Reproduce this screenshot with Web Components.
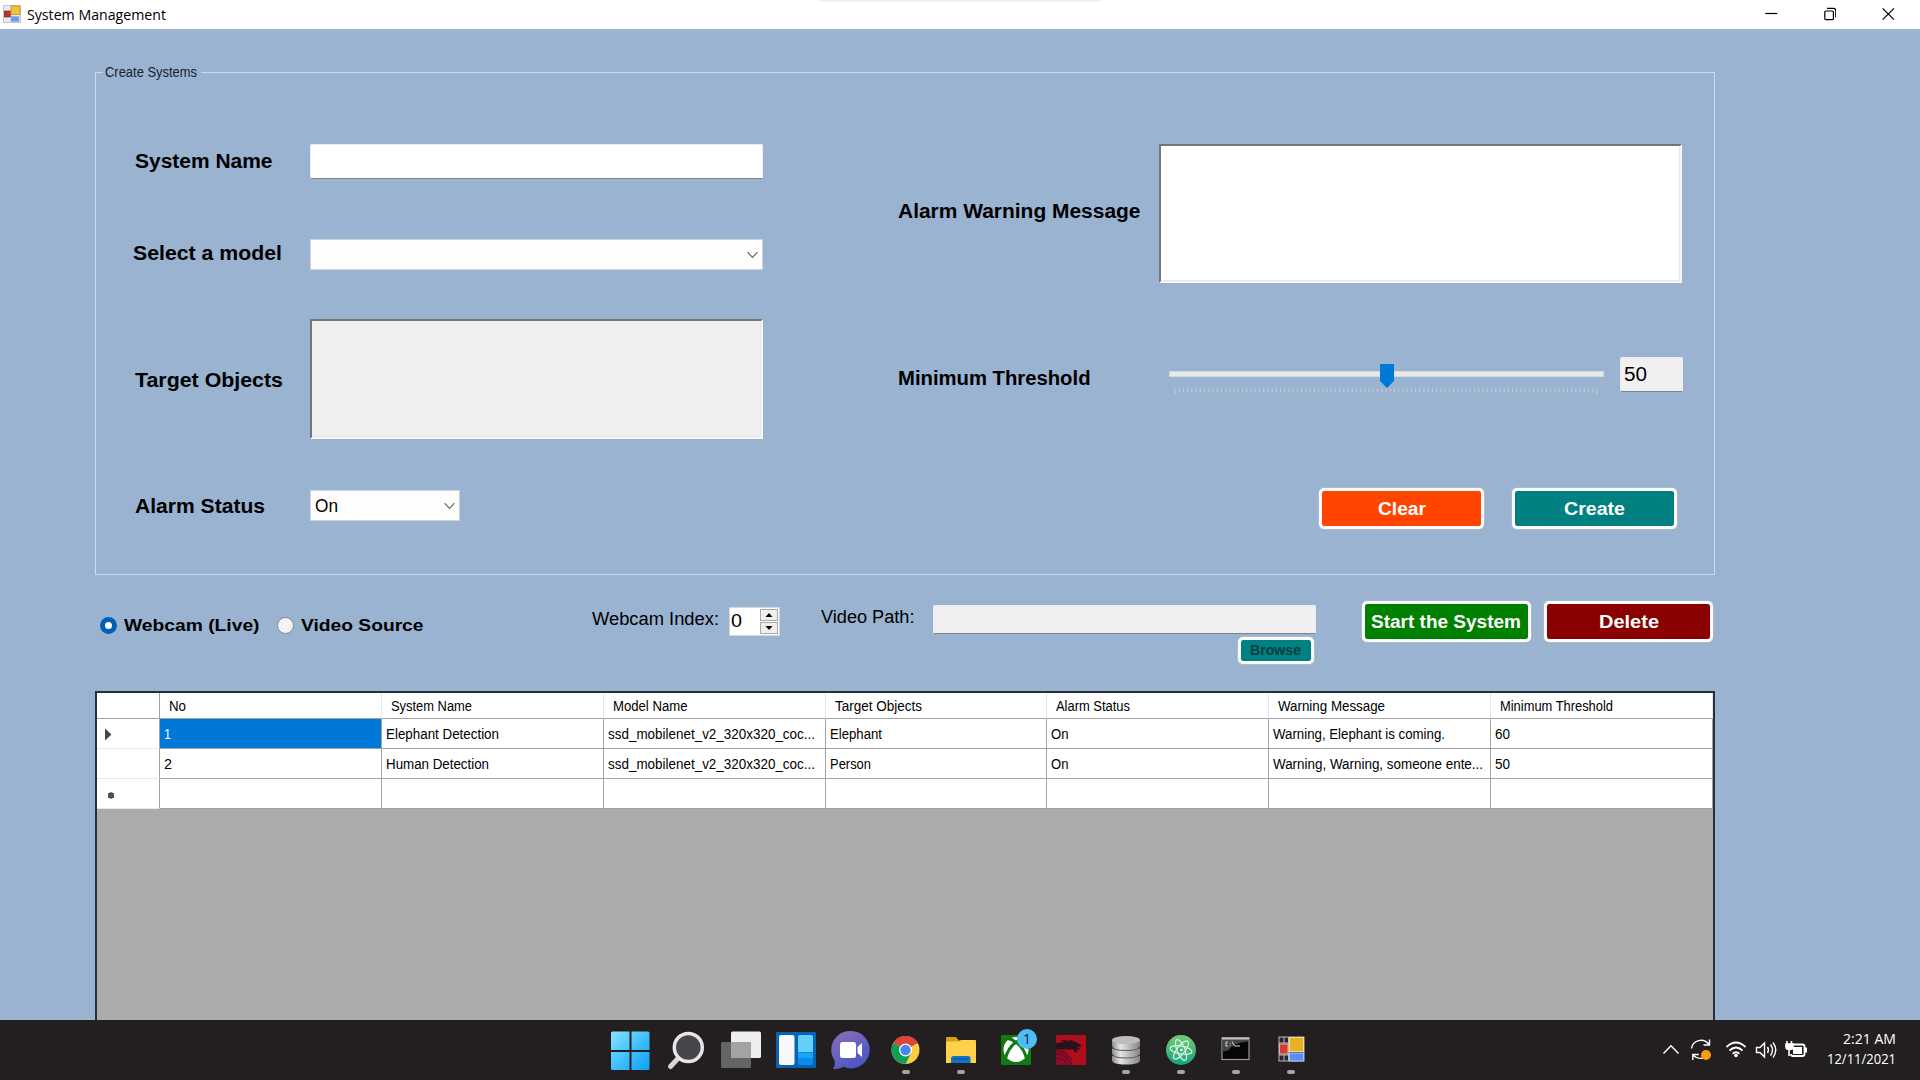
<!DOCTYPE html>
<html lang="en">
<head>
<meta charset="utf-8">
<title>System Management</title>
<style>
html,body{margin:0;padding:0;width:1920px;height:1080px;overflow:hidden;background:#99b3d1}
body{font-family:"Liberation Sans",Arial,sans-serif;color:#000}
</style>
</head>
<body>
<system-app></system-app>
<script>
function define(name, html, init) {
  const t = document.createElement('template');
  t.innerHTML = html;
  customElements.define(name, class extends HTMLElement {
    constructor() {
      super();
      this.attachShadow({ mode: 'open' }).appendChild(t.content.cloneNode(true));
    }
    connectedCallback() { if (init) init.call(this, this.shadowRoot); }
  });
}

// One line of text, stretched so that it spans the width given in "w".
define('ui-text', `<style>:host{display:block;white-space:nowrap;flex:none}span{display:inline-block;transform-origin:0 50%}</style><span><slot></slot></span>`,
function (r) {
  const w = parseFloat(this.getAttribute('w')), s = r.querySelector('span');
  if (!w) return;
  this.style.width = w + 'px';
  if (s.offsetWidth) {
    s.style.transform = 'none';
    s.style.transform = 'scaleX(' + (w / s.getBoundingClientRect().width).toFixed(4) + ')';
  }
});

define('title-bar', `<style>
:host{display:flex;height:29px;background:#fff;align-items:center;box-sizing:border-box;padding:0 25px 0 3px}
.ic{width:18px;height:18px;margin-right:6px;margin-top:-1px}
ui-text{font:15px/28px "Open Sans","Noto Sans",sans-serif;margin-top:-2px}
.edge{width:280px;height:3px;margin:0 0 26px 654px;background:linear-gradient(#eaeaea,#fff);border-radius:0 0 4px 4px}
.ctl{margin-left:auto;display:flex;gap:46px;margin-top:-1px}
.ctl svg{width:12.6px;height:14px;fill:none;stroke:#000;stroke-width:1.2}
</style>
<svg class="ic" viewBox="0 0 18 18"><rect x=".5" y=".5" width="17" height="17" fill="#e8ebef" stroke="#c3c8ce"/><rect x="1.3" y="6" width="6" height="6" fill="#c3302b" stroke="#7e1d1d" stroke-width=".6"/><rect x="8" y="1" width="9" height="8.6" fill="#f5c23a" stroke="#b8891c" stroke-width=".7"/><rect x="8" y="11.5" width="8" height="5" fill="#6f9cf0" stroke="#8fb0ec" stroke-width=".6"/></svg>
<ui-text w="139">System Management</ui-text><div class="edge"></div>
<div class="ctl">
<svg viewBox="0 0 12.6 14"><path d="M.3 6.5h12"/></svg>
<svg viewBox="0 0 12.6 14"><rect x=".8" y="4" width="8.6" height="8.6" rx="1"/><path d="M3 1.4h6.3q2.5 0 2.5 2.5v6.5"/></svg>
<svg viewBox="0 0 12.6 14"><path d="M.6 1.3l11.4 11.4M12 1.3L.6 12.7"/></svg>
</div>`);

define('text-box', `<style>
:host{display:flex;box-sizing:border-box;flex:none;background:#fff;border:1px solid #e9edf2;border-bottom:1.5px solid #7d838a;border-radius:2px;font-size:20px}
:host([readonly]){background:#f0f0f0}
</style><slot></slot>`);

define('sunken-area', `<style>
:host{display:block;box-sizing:border-box;flex:none;background:#fff;border:2px solid;border-color:#767676 #f4f6f8 #f4f6f8 #767676;box-shadow:inset -1px -1px #e6e6e6}
:host([readonly]){background:#f0f0f0}
</style>`);

define('combo-box', `<style>
:host{display:flex;align-items:center;justify-content:space-between;box-sizing:border-box;flex:none;height:31px;background:#fdfdfd;border:1px solid #cdd3da;padding:0 4px 0 4px;font-size:18px}
div{padding-top:2px}
svg{width:11px;height:8px;fill:none;stroke:#6a6a6a;stroke-width:1.2}
</style><div><slot></slot></div><svg viewBox="0 0 11 8"><path d="M.6 1.2L5.5 6.4 10.4 1.2"/></svg>`);

define('form-row', `<style>
:host{display:flex;align-items:center}
.l{flex:none;box-sizing:border-box;width:var(--lw);padding-left:var(--lp);padding-top:var(--lt,0px);padding-bottom:var(--lb,0px);font:bold 20px/24px "Liberation Sans",Arial,sans-serif}
</style><div class="l"><slot name="label"></slot></div><slot></slot>`);

define('track-bar', `<style>
:host{display:block;width:440px;height:34px;flex:none}svg{display:block}
</style><svg width="440" height="34" viewBox="0 0 440 34"><rect x="2.5" y="8.5" width="434" height="5" fill="#e7eaea" stroke="#d6d6d6"/><g class="t" stroke="#c3cad2" stroke-width="1.2"></g><path d="M213 1h14v17l-7 7-7-7z" fill="#0078d7"/></svg>`,
function (r) {
  let d = '';
  for (let i = 0; i <= 100; i++) d += `M${(8 + i * 4.22).toFixed(2)} 25.500v${i % 100 ? 4 : 6}`;
  r.querySelector('.t').innerHTML = `<path d="${d}"/>`;
});

define('push-button', `<style>
:host{display:flex;align-items:center;justify-content:center;box-sizing:border-box;flex:none;height:41px;background:var(--bg);background-clip:padding-box;border:3px solid #fbfbfb;border-radius:5px;box-shadow:0 0 0 .5px #c3c3c3;color:#fff;font:bold 18px/24px "Liberation Sans",Arial,sans-serif}
</style><slot></slot>`);

define('radio-option', `<style>
:host{display:flex;align-items:center;flex:none;font:bold 17px/22px "Liberation Sans",Arial,sans-serif}
i{box-sizing:border-box;width:17px;height:17px;border-radius:50%;border:1px solid #858585;background:#f3f3f3;margin:-2px 7px 0 0}
:host([checked]) i{border:5.5px solid #005fb8;background:#fff}
</style><i></i><slot></slot>`);

define('number-spinner', `<style>
:host{display:flex;box-sizing:border-box;flex:none;width:51px;height:29px;background:#fff;border:1px solid #d3d7dc;justify-content:space-between;padding:1px 1px 1px 1px;font:18px/24px "Liberation Sans",Arial,sans-serif}
.b{display:flex;flex-direction:column;width:18px;gap:1px}
.b div{flex:1;background:#efefef;border:1px solid #a9a9a9;display:flex;align-items:center;justify-content:center}
svg{width:8px;height:4px}
</style><slot></slot><div class="b"><div><svg viewBox="0 0 8 4"><path d="M4 0l3.5 4h-7z"/></svg></div><div><svg viewBox="0 0 8 4"><path d="M4 4L.5 0h7z"/></svg></div></div>`);

define('system-form', `<style>
:host{display:block;width:1620px}
fieldset{margin:0;padding:0;box-sizing:border-box;width:1620px;height:513px;border:1.5px solid #cfdae6;min-width:0;display:block}
legend{margin:0 0 0 7px;padding:0 4px 0 2px;height:20px;font-size:14px;line-height:20px;color:#1a222b}
.cols{display:flex;gap:134px}
.left{width:668px;display:flex;flex-direction:column;--lw:214px}
.right{display:flex;flex-direction:column;width:800px}
.btns{display:flex;gap:28px;margin-top:96px;padding-left:421px}
</style>
<fieldset><legend><ui-text w="92">Create Systems</ui-text></legend>
<div class="cols">
<div class="left">
<form-row style="margin-top:62px;height:35px;--lp:39px;--lb:1px"><ui-text slot="label" w="137.5">System Name</ui-text><text-box style="width:453px;height:35px"></text-box></form-row>
<form-row style="margin-top:60px;height:31px;--lp:37px;--lb:4px"><ui-text slot="label" w="149">Select a model</ui-text><combo-box style="width:453px"></combo-box></form-row>
<form-row style="margin-top:49px;height:120px;--lp:39px;--lt:2px"><ui-text slot="label" w="148">Target Objects</ui-text><sunken-area readonly style="width:453px;height:120px"></sunken-area></form-row>
<form-row style="margin-top:51px;height:31px;--lp:39px;--lt:1px"><ui-text slot="label" w="130">Alarm Status</ui-text><combo-box style="width:150px"><ui-text w="23">On</ui-text></combo-box></form-row>
</div>
<div class="right">
<form-row style="margin-top:62px;height:139px;--lw:261px;--lp:0px;--lt:-4px"><ui-text slot="label" w="242.5" style="margin-top:-6px">Alarm Warning Message</ui-text><sunken-area style="width:523px;height:139px"></sunken-area></form-row>
<form-row style="margin-top:73px;height:36px;--lw:269px;--lp:0px;--lt:8px"><ui-text slot="label" w="192.5">Minimum Threshold</ui-text><track-bar style="margin-top:12px"></track-bar><text-box readonly style="width:63px;height:35px;margin-left:13px;padding:5px 0 0 3px"><ui-text w="23">50</ui-text></text-box></form-row>
<div class="btns"><push-button style="width:165px;--bg:#ff4500"><ui-text w="48">Clear</ui-text></push-button><push-button style="width:165px;--bg:#008080"><ui-text w="61">Create</ui-text></push-button></div>
</div></div></fieldset>`);

define('control-strip', `<style>
:host{display:flex;height:116px;align-items:flex-start;width:1620px;font-size:18px;line-height:22px}
.path{display:flex;flex-direction:column;margin:30px 0 0 18px;width:383px}
</style>
<radio-option checked style="margin:40px 0 0 4.500px"><ui-text w="135.5">Webcam (Live)</ui-text></radio-option>
<radio-option style="margin:40px 0 0 18px"><ui-text w="122.5">Video Source</ui-text></radio-option>
<ui-text w="127" style="margin:33px 0 0 168px">Webcam Index:</ui-text>
<number-spinner style="margin:32px 0 0 10.500px"><ui-text w="11">0</ui-text></number-spinner>
<ui-text w="93.5" style="margin:31px 0 0 41px">Video Path:</ui-text>
<div class="path"><text-box readonly style="width:383px;height:28.500px"></text-box>
<push-button style="width:76px;height:27px;margin:3px 0 0 305px;--bg:#008080;font-size:14.5px;color:#04403f"><ui-text w="51">Browse</ui-text></push-button></div>
<push-button style="width:169px;margin:26px 0 0 46px;--bg:#008000"><ui-text w="150">Start the System</ui-text></push-button>
<push-button style="width:169px;margin:26px 0 0 13.500px;--bg:#8b0000"><ui-text w="60">Delete</ui-text></push-button>`);

define('data-grid', `<style>
:host{display:block;box-sizing:border-box;width:1620px;height:329px;background:#ababab;border:2px solid #27303a;border-bottom:0;font-size:14px}
.r{display:grid;grid-template-columns:63px 222px 221.5px 222px 221.5px 222px 221.5px 1fr;height:30px;line-height:31px;background:#fff}
.r>*{box-sizing:border-box;border-right:1.5px solid #a2a2a2;border-bottom:1.5px solid #a2a2a2;padding-left:4px;overflow:hidden}
.r>:first-child{border-bottom-color:#e8e8e8;padding-left:8px}
.h{height:26px;line-height:27px}
.h>*{padding-left:9px;border-right-color:#e6e6e6}
.h>:first-child{border-color:#a2a2a2}
.sel{background:#0078d7;color:#fff}
svg{display:block}
</style><div class="b"></div>`,
function (r) {
  const mk = (cls, lead, cells) => `<div class="r ${cls}"><div>${lead}</div>` + cells.map(([t, w], i) =>
    `<div${cls === 's' && !i ? ' class="sel"' : ''}>${t ? `<ui-text w="${w}">${t}</ui-text>` : ''}</div>`).join('') + '</div>';
  r.querySelector('.b').innerHTML =
    mk('h', '', [['No', 17], ['System Name', 81], ['Model Name', 74.5], ['Target Objects', 87], ['Alarm Status', 74], ['Warning Message', 107], ['Minimum Threshold', 113]]) +
    mk('s', '<svg width="8" height="28"><path d="M0 9.500l6.500 6L0 21.500z" fill="#444"/></svg>', [['1', 7], ['Elephant Detection', 113], ['ssd_mobilenet_v2_320x320_coc...', 207], ['Elephant', 52], ['On', 17.5], ['Warning, Elephant is coming.', 172], ['60', 15]]) +
    mk('', '', [['2', 8], ['Human Detection', 103], ['ssd_mobilenet_v2_320x320_coc...', 207], ['Person', 41], ['On', 17.5], ['Warning, Warning, someone ente...', 210], ['50', 15]]) +
    mk('', '<svg width="12" height="29"><circle cx="6" cy="16.500" r="3" fill="#444"/><path d="M3 14l6 5M9 14l-6 5M6 13v7" stroke="#555" stroke-width="1"/></svg>', [[], [], [], [], [], [], []]);
});

const icons = {
  start: `<defs><linearGradient id="g" x1="8" y1="16" x2="47" y2="55" gradientUnits="userSpaceOnUse"><stop stop-color="#7fe0ff"/><stop offset=".5" stop-color="#39bdfb"/><stop offset="1" stop-color="#0b96f5"/></linearGradient></defs><path fill="url(#g)" d="M9.500 11.500H26.500V30H8V13q0-1.500 1.500-1.500zM28.500 11.500H45q1.500 0 1.500 1.500v17H28.500zM8 32h18.500v18H9.500Q8 50 8 48.500zM28.500 32h18v16.500q0 1.500-1.500 1.500H28.500z"/>`,
  search: `<path d="M19 39.500L12.500 46.500" stroke="#d6d6d6" stroke-width="5" stroke-linecap="round"/><circle cx="30.300" cy="27.500" r="14" fill="#47464a" stroke="#e6e6e6" stroke-width="3.500"/>`,
  tasks: `<rect x="18" y="11.500" width="30" height="26.500" rx="1.500" fill="#eee"/><rect x="8" y="22" width="30" height="26" rx="1.500" fill="#6b6b6b" opacity=".92"/><path d="M18 22h20v16H18z" fill="#a3a3a3"/>`,
  widgets: `<rect x="8" y="12" width="40" height="36" rx="1" fill="#0a63b2"/><rect x="11" y="15" width="15.500" height="30" rx="2" fill="#f6f8fa"/><rect x="30" y="15" width="15" height="30" rx="2" fill="#0a8bf0"/><path d="M30 32v-15q0-2 2-2h11q2 0 2 2v15z" fill="#62d0fb"/><path d="M30 33h15v5H30z" fill="#1aa3ee"/>`,
  chat: `<defs><linearGradient id="g" x1="0" y1="0" x2=".6" y2="1"><stop stop-color="#8f6fb5"/><stop offset="1" stop-color="#4b55c8"/></linearGradient></defs><path fill="url(#g)" d="M30 11a18.700 18.700 0 1 1-7.500 35.800q-5 3-10.500 2 2.500-3 1.500-8.500A18.700 18.700 0 0 1 30 11z"/><rect x="19" y="22" width="16" height="16" rx="2.500" fill="#fff"/><path d="M36.500 27l4.500-4v14l-4.500-4z" fill="#fff"/>`,
  chrome: `<circle cx="30.500" cy="30" r="14" fill="#ffcd40"/><path d="M30.500 30L18.400 23A14 14 0 0 1 42.600 23z" fill="#dc4437"/><path d="M30.500 23.500H42.900A14 14 0 0 0 18.400 23z" fill="#dc4437"/><path d="M18.400 23A14 14 0 0 0 30.500 44L36 33.500 30.500 30z" fill="#109d58"/><circle cx="30.500" cy="30" r="6.500" fill="#fff"/><circle cx="30.500" cy="30" r="5.200" fill="#4688f1"/>`,
  folder: `<path d="M13 18q0-1 1-1h9l3 3.500h16q1 0 1 1v8H13z" fill="#dba012"/><path d="M13 21.500l13 0 2-1.500h14q1 0 1 1v22H13z" fill="#ffd04a"/><path d="M18 43v-4.500q0-2.500 2.500-2.500H35q2.500 0 2.500 2.500V43z" fill="#1273c4"/><path d="M21 39h14" stroke="#0a4d92"/>`,
  xbox: `<rect x="13" y="15" width="30" height="30" rx="1" fill="#0f7b10"/><circle cx="28" cy="29.500" r="12.500" fill="#fff"/><path d="M20 18.500q4 .5 8 4 4-3.500 8-4M28 22Q20 28 17.500 38.500M28 22q8 6 10.500 16.500" fill="none" stroke="#0f7b10" stroke-width="3"/><circle cx="39" cy="19" r="10" fill="#4cbdf5"/><text x="39" y="24.200" text-anchor="middle" font-family="Open Sans" font-size="14" fill="#123">1</text>`,
  dragon: `<rect x="13" y="15" width="30" height="30" fill="#b00d1d"/><path d="M13 29q7 0 12 6t5 10H13z" fill="#8d0a28"/><path d="M13 23.500q5-1.500 8-1.200L17.500 20q6 0 9.500 1.800L25 19.500q5 .8 7 2.500 4 .5 6 3.500l-.5 1.500-4.500-.3 4 2-.8 1.300-3-1 1.500 3-2.200.8-2.500-3.300q-2-.5-4 .5l-5-1.500 1 1.800q-4-1.300-9-.8z" fill="#26121a"/><path d="M13 34q11 0 16 11M13 38q8 0 12 7M13 31l9 1 7 7" fill="none" stroke="#5f0a28" stroke-width="1"/>`,
  db: `<defs><linearGradient id="g"><stop stop-color="#8d8d8d"/><stop offset=".3" stop-color="#e4e4e4"/><stop offset="1" stop-color="#858585"/></linearGradient></defs><g fill="url(#g)"><path d="M14 36v4q0 4.500 14 4.500T42 40v-4z"/><path d="M14 28.500v4.500q0 4.500 14 4.500T42 33v-4.500z"/><path d="M14 20v5.500Q14 30 28 30t14-4.500V20z"/></g><ellipse cx="28" cy="20" rx="14" ry="4" fill="#bcbcbc"/><path d="M14 26q0 4.500 14 4.500T42 26M14 33.500q0 4.500 14 4.500t14-4.500" fill="none" stroke="#5a5a5a"/>`,
  atom: `<defs><linearGradient id="g" x1="0" y1="0" x2="0" y2="1"><stop stop-color="#78c974"/><stop offset="1" stop-color="#14a37f"/></linearGradient></defs><circle cx="28" cy="30" r="15" fill="url(#g)"/><g fill="none" stroke="#d9f4e2" stroke-width="1.200"><ellipse cx="28" cy="30" rx="11" ry="4" transform="rotate(10 28 30)"/><ellipse cx="28" cy="30" rx="11" ry="4" transform="rotate(68 28 30)"/><ellipse cx="28" cy="30" rx="11" ry="4" transform="rotate(128 28 30)"/></g><circle cx="28.500" cy="30" r="1.300" fill="#e8fff0"/>`,
  cmd: `<rect x="14" y="18" width="27" height="21.500" fill="#060606" stroke="#969b9f" stroke-width="1.200"/><path d="M14.500 18.500h26v3q-16 1-20 9l-6 1z" fill="#454545"/><path d="M14 18.500h27" stroke="#c8c8c8" stroke-width="2"/><path d="M20 22h-2v4h2M22 23v.8M22 25v.8M24 21.500l2.500 4.500M27 26h5" stroke="#ddd" fill="none"/>`,
  forms: `<rect x="16" y="17" width="25" height="24" fill="#2a2528" stroke="#b8bcc0"/><path d="M16 23h9M25.500 17v24M16 35h9M21 17v6M21 35v6" stroke="#b8bcc0"/><rect x="16.500" y="24" width="8.500" height="10" fill="#d33b35" stroke="#eab0aa"/><rect x="26.500" y="17.500" width="14" height="14" fill="#e8b022" stroke="#f6dc90"/><rect x="26.500" y="33" width="14" height="8" fill="#5c8df0" stroke="#a9c5f8"/>`
};

define('task-icon', `<style>:host{display:flex;width:55px;height:60px;flex:none}svg{display:block}</style><svg width="55" height="60" viewBox="0 0 55 60"></svg>`,
function (r) {
  const x = this.getAttribute('x') || 28;
  r.querySelector('svg').innerHTML = icons[this.getAttribute('name')] +
    (this.hasAttribute('open') ? `<rect x="${x - 4}" y="50" width="8" height="4" rx="2" fill="#a6a4a5"/>` : '');
});

define('task-bar', `<style>
:host{display:flex;height:60px;width:1920px;background:#231f20;color:#fff;box-sizing:border-box;padding-left:603px}
.tray{display:flex;margin-left:auto;padding-right:24px}
.clock{display:flex;flex-direction:column;align-items:flex-end;font:14.5px/20px "Open Sans","Noto Sans",sans-serif;padding-top:9px;margin-left:16px}
svg{display:block}
</style>
<task-icon name="start"></task-icon><task-icon name="search"></task-icon><task-icon name="tasks"></task-icon><task-icon name="widgets"></task-icon><task-icon name="chat" style="margin-left:-2.500px;margin-right:2.500px"></task-icon><task-icon name="chrome" open x="31" style="margin-left:-3px;margin-right:3px"></task-icon><task-icon name="folder" open></task-icon><task-icon name="xbox"></task-icon><task-icon name="dragon"></task-icon><task-icon name="db" open></task-icon><task-icon name="atom" open></task-icon><task-icon name="cmd" open></task-icon><task-icon name="forms" open></task-icon>
<div class="tray"><svg width="152" height="60" viewBox="1660 0 152 60" fill="none" stroke="#fff" stroke-width="1.400">
<path d="M1664.500 33.500l7.500-7.800 7.500 7.800"/>
<path d="M1692.500 28.500a9.600 9.600 0 0 1 17-4.500M1710.500 19.500v5.500h-6M1710 33a9.600 9.600 0 0 1-15.500 2.500M1693.800 40v-5.500h6"/><circle cx="1707" cy="35" r="5" fill="#ff9a0a" stroke="none"/>
<path d="M1727.500 27q9.500-9 19 0M1730.500 30.500q6.500-6 13 0M1733.500 33.800q3.500-3 7 0" stroke-width="1.800"/><circle cx="1737" cy="35.500" r="1.800" fill="#fff" stroke="none"/>
<path d="M1757.500 27.500h3.500l4.500-4.500v14l-4.500-4.500h-3.500z"/><path d="M1768.500 27q2 3 0 6M1771.500 24.500q4 5.500 0 11M1774 22.500q5.500 7.500 0 15"/>
<path d="M1794 24.500h9.500q2 0 2 2v7.500q0 2-2 2h-9.500q-2 0-2-2" stroke-width="1.800"/><path d="M1807 27.500v5" stroke-width="2"/><path d="M1794 27h9v7h-9z" fill="#fff" stroke="none"/><path d="M1787 24h7v3q0 2.500-3.500 2.500T1787 27zM1788 21v3M1792.500 21v3M1790 29v7" fill="#fff" stroke-width="1.600"/>
</svg>
<div class="clock"><ui-text w="53">2:21 AM</ui-text><ui-text w="69">12/11/2021</ui-text></div></div>`);

define('system-app', `<style>
:host{display:flex;flex-direction:column;width:1920px;height:1080px;background:#99b3d1}
main{flex:none;height:991px;box-sizing:border-box;padding:33px 0 0 95px}
</style>
<title-bar></title-bar><main><system-form></system-form><control-strip></control-strip><data-grid></data-grid></main><task-bar></task-bar>`);

// Text is measured once more after the whole tree is laid out.
(function refit(root) {
  root.querySelectorAll('*').forEach(e => {
    if (e.localName === 'ui-text') e.connectedCallback();
    if (e.shadowRoot) refit(e.shadowRoot);
  });
})(document);
</script>
</body>
</html>
